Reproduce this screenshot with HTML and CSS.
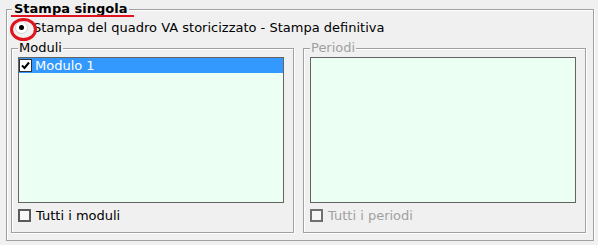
FILE: index.html
```html
<!DOCTYPE html>
<html lang="it">
<head>
    <meta charset="UTF-8">
    <title>Stampa singola</title>
    <link rel="stylesheet" href="styles.css">
</head>
<body>
    <fieldset class="group outer">
        <legend class="title">Stampa singola</legend>

        <label class="radio-row">
            <span class="radio"></span>
            Stampa del quadro VA storicizzato - Stampa definitiva
        </label>

        <div class="panels">
            <fieldset class="group panel">
                <legend>Moduli</legend>
                <div class="listbox">
                    <div class="item selected">
                        <span class="check checked">
                            <svg width="9" height="9" viewBox="0 0 9 9"><path d="M1 4.5 L3.5 7 L8 1.5" fill="none" stroke="#000" stroke-width="2"/></svg>
                        </span>
                        Modulo 1
                    </div>
                </div>
                <label class="check-row">
                    <span class="check"></span>
                    Tutti i moduli
                </label>
            </fieldset>

            <fieldset class="group panel disabled">
                <legend>Periodi</legend>
                <div class="listbox"></div>
                <label class="check-row">
                    <span class="check"></span>
                    Tutti i periodi
                </label>
            </fieldset>
        </div>
    </fieldset>
</body>
</html>
```

FILE: styles.css
```css
* {
    box-sizing: border-box;
}

body {
    margin: 0;
    background: #f0f0f0;
    font-family: "DejaVu Sans", sans-serif;
    font-size: 13px;
    color: #000;
}

/* etched group box */
.group {
    margin: 0;
    padding: 0;
    min-width: 0;
    border: 1px solid #a0a0a0;
    box-shadow: inset 1px 1px 0 #fff, 1px 1px 0 #fff;
}

.group legend {
    padding: 0 1px;
    line-height: 14px;
    background: #f0f0f0;
}

.outer {
    margin: 2px 0 0 6px;
    width: 588px;
    height: 239px;
    padding: 0 7px 0 4px;
}

.outer > .title {
    position: relative;
    margin-left: 1px;
    padding: 0 2px;
    font-weight: bold;
}

/* red annotation under the title */
.outer > .title::after {
    content: '';
    position: absolute;
    left: -1px;
    right: -5px;
    bottom: -1px;
    height: 2px;
    background: #e0141e;
}

.radio-row {
    position: relative;
    display: flex;
    align-items: center;
    gap: 5px;
    height: 14px;
    margin-top: 4px;
    margin-left: 4px;
}

.radio {
    width: 13px;
    height: 13px;
    border-radius: 50%;
    border: 1px solid #d4d4d4;
    background: #fff;
    display: flex;
    align-items: center;
    justify-content: center;
}

.radio::before {
    content: '';
    width: 5px;
    height: 5px;
    border-radius: 50%;
    background: #000;
}

/* red annotation circle round the radio */
.radio-row::before {
    content: '';
    position: absolute;
    left: -5px;
    top: -2px;
    width: 21px;
    height: 17px;
    border: 3px solid #e0141e;
    border-radius: 50%;
}

.panels {
    display: grid;
    grid-template-columns: 283px 283px;
    gap: 9px;
    margin-top: 7px;
}

.panel {
    height: 192px;
    padding: 0 9px 0 6px;
}

.panel.disabled legend,
.panel.disabled .check-row {
    color: #a0a0a0;
}

.listbox {
    width: 266px;
    height: 146px;
    margin-top: 2px;
    border: 1px solid #646464;
    background: #ebfff3;
}

.item {
    display: flex;
    align-items: center;
    gap: 3px;
    height: 15px;
}

.item.selected {
    background: #3399ff;
    color: #fff;
}

.check {
    width: 13px;
    height: 13px;
    border: 2px solid #5a5a5a;
    background: #f7f7f7;
}

.disabled .check {
    border-color: #707070;
}

.check.checked {
    border: 1px solid #333;
    background: #fff;
    display: flex;
    align-items: center;
    justify-content: center;
}

.check-row {
    display: flex;
    align-items: center;
    gap: 5px;
    height: 13px;
    margin-top: 6px;
}
```
